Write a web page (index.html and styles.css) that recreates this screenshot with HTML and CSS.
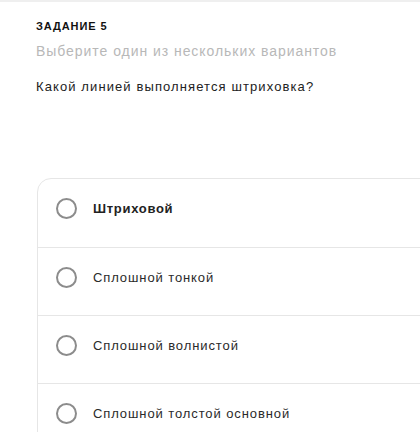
FILE: index.html
```html
<!DOCTYPE html>
<html lang="ru">
<head>
    <meta charset="UTF-8">
    <meta name="viewport" content="width=device-width, initial-scale=1.0">
    <title>Задание 5</title>
    <link rel="stylesheet" href="styles.css">
</head>
<body>
    <div class="page">
        <div class="task">
            <h3 class="task-num">ЗАДАНИЕ 5</h3>
            <p class="task-hint">Выберите один из нескольких вариантов</p>
            <p class="task-question">Какой линией выполняется штриховка?</p>
        </div>

        <!-- варианты ответа -->
        <ul class="answers">
            <li class="answer answer-first">
                <span class="radio"></span>
                <span class="answer-text">Штриховой</span>
            </li>
            <li class="answer">
                <span class="radio"></span>
                <span class="answer-text">Сплошной тонкой</span>
            </li>
            <li class="answer">
                <span class="radio"></span>
                <span class="answer-text">Сплошной волнистой</span>
            </li>
            <li class="answer">
                <span class="radio"></span>
                <span class="answer-text">Сплошной толстой основной</span>
            </li>
        </ul>
    </div>
</body>
</html>
```

FILE: styles.css
```css
body {
    margin: 0;
    padding: 0;
    background-color: #fff;
    font-family: "Liberation Sans", Arial, sans-serif;
    overflow: hidden;
}

.page {
    border-top: 2px solid #efefef;
}

.task {
    padding-left: 36px;
}

.task-num {
    margin: 17px 0 0;
    font-size: 11px;
    line-height: 14px;
    font-weight: 700;
    letter-spacing: 0.9px;
    color: #111;
}

.task-hint {
    margin: 8px 0 0;
    font-size: 14px;
    line-height: 20px;
    letter-spacing: 0.95px;
    color: #b8b8b8;
}

.task-question {
    margin: 16px 0 0;
    font-size: 13px;
    line-height: 20px;
    letter-spacing: 1.1px;
    color: #222;
}

.answers {
    list-style: none;
    margin: 81px 0 0 37px;
    padding: 0;
    width: 440px;
    border: 1px solid #e6e6e6;
    border-radius: 14px 0 0 0;
}

.answer {
    display: flex;
    align-items: center;
    gap: 16px;
    padding: 19px 18px 27px;
    border-top: 1px solid #e6e6e6;
}

.answer-first {
    border-top: none;
    padding-bottom: 28px;
}

.radio {
    width: 21px;
    height: 21px;
    box-sizing: border-box;
    border: 2px solid #8c8c8c;
    border-radius: 50%;
    flex-shrink: 0;
}

.answer-text {
    font-size: 13px;
    letter-spacing: 0.9px;
    color: #2a2a2a;
}

.answer-first .answer-text {
    font-weight: 700;
    letter-spacing: 0.7px;
    color: #222;
}
```
